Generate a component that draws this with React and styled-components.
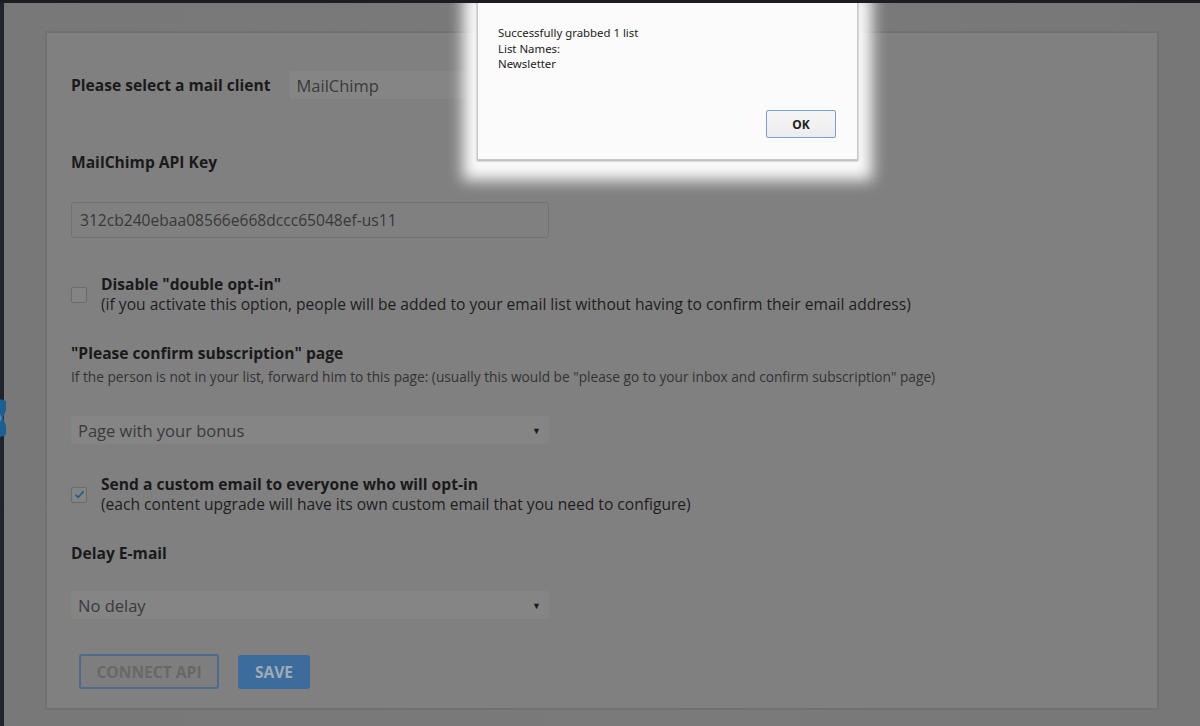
import React from "react";
import styled, { createGlobalStyle } from "styled-components";

const Global = createGlobalStyle`
  html, body { margin: 0; padding: 0; }
  body { font-family: "Open Sans", "Noto Sans", sans-serif; background: #787878; }
`;

const Page = styled.div`
  position: relative;
  display: flex;
  min-height: 726px;
  background: linear-gradient(90deg, #787878 0%, #7a7a7a 60%, #777 100%);
  border-top: 3px solid #1c1d22;
  box-sizing: border-box;
  overflow: hidden;
`;

const SideStrip = styled.div`
  position: relative;
  width: 4px;
  flex: none;
  background: #1f232a;
`;

const SideArrow = styled.svg`
  position: absolute;
  left: 0;
  top: 396px;
`;

const Main = styled.div`
  flex: 1;
  padding: 28px 41px 13px 41px;
`;

const Panel = styled.div`
  border: 2px solid #717171;
  background: #808080;
  padding: 38px 24px 19px 24px;
  display: flex;
  flex-direction: column;
  align-items: flex-start;
`;

const InlineRow = styled.div`
  display: flex;
  align-items: center;
  gap: 19px;
`;

const Label = styled.div`
  font-size: 15.6px;
  font-weight: 700;
  line-height: 22px;
  color: #1a1a1a;
  margin-top: ${(p) => p.$mt || 0}px;
`;

const Help = styled.div`
  font-size: 13.7px;
  line-height: 18px;
  color: #333;
  margin-top: 4px;
`;

const SelectBox = styled.div`
  box-sizing: border-box;
  width: ${(p) => p.$w || 478}px;
  height: ${(p) => p.$h || 28}px;
  margin-top: ${(p) => p.$mt || 0}px;
  background: #858585;
  border-radius: 2px;
  display: flex;
  align-items: center;
  justify-content: space-between;
  padding: 0 8px 0 7px;
  font-size: 16.5px;
  color: #3a3a3a;
`;

const Caret = styled.span`
  font-size: 9px;
  color: #1a1a1a;
`;

const TextInput = styled.div`
  box-sizing: border-box;
  width: 478px;
  height: 36px;
  margin-top: ${(p) => p.$mt || 0}px;
  border: 1px solid #717171;
  border-radius: 3px;
  display: flex;
  align-items: center;
  padding: 0 8px;
  font-size: 15.6px;
  color: #383838;
`;

const CheckRow = styled.div`
  display: flex;
  align-items: center;
  gap: 14px;
  margin-top: ${(p) => p.$mt || 0}px;
`;

const Box = styled.div`
  box-sizing: border-box;
  width: 16px;
  height: 16px;
  border: 1px solid #6b6b6b;
  border-radius: 2px;
  background: #848484;
  display: flex;
  align-items: center;
  justify-content: center;
  flex: none;
  margin-top: 1px;
`;

const CheckText = styled.div`
  line-height: 20px;
  font-size: 15.6px;
  color: #1e1e1e;
`;

const CheckTitle = styled.div`
  font-weight: 700;
  color: #1a1a1a;
`;

const Buttons = styled.div`
  display: flex;
  gap: 19px;
  margin-top: 35px;
  margin-left: 8px;
`;

const OutlineBtn = styled.div`
  box-sizing: border-box;
  width: 140px;
  height: 35px;
  border: 2px solid #4d6b8e;
  border-radius: 3px;
  background: #7e7e7e;
  display: flex;
  align-items: center;
  justify-content: center;
  font-size: 15.6px;
  font-weight: 700;
  color: #686868;
`;

const FilledBtn = styled.div`
  box-sizing: border-box;
  width: 72px;
  height: 34px;
  margin-top: 1px;
  border-radius: 3px;
  background: #3b6c9c;
  display: flex;
  align-items: center;
  justify-content: center;
  font-size: 15.6px;
  font-weight: 700;
  color: #a0aab6;
`;

const Dialog = styled.div`
  position: absolute;
  left: 477px;
  top: -3px;
  width: 381px;
  height: 160px;
  box-sizing: border-box;
  background: #fbfbfb;
  border: 1px solid #c9c9c9;
  border-top: none;
  box-shadow: 0 1px 2px rgba(0, 0, 0, 0.35), 0 6px 14px 14px rgba(255, 255, 255, 0.96);
  padding: 25px 21px 21px 20px;
  display: flex;
  flex-direction: column;
  font-family: "Noto Sans", "Open Sans", sans-serif;
`;

const DialogText = styled.div`
  flex: 1;
  font-size: 11.4px;
  line-height: 15.5px;
  color: #222;
`;

const DialogActions = styled.div`
  display: flex;
  justify-content: flex-end;
`;

const OkButton = styled.div`
  box-sizing: border-box;
  width: 70px;
  height: 28px;
  border: 1px solid #7a9fd4;
  border-radius: 2px;
  background: linear-gradient(#f6f6f6, #ececec);
  display: flex;
  align-items: center;
  justify-content: center;
  font-size: 12px;
  font-weight: 700;
  color: #222;
`;

export default function App() {
  return (
    <>
      <Global />
      <Page>
        <SideStrip>
          <SideArrow width="6" height="38" viewBox="0 0 6 38">
            <polygon points="0,0 6,2 6,11 3,19 6,27 6,36 0,38" fill="#1b5f93" />
            <polygon points="0,15 2,19 0,23" fill="#4f86b3" />
          </SideArrow>
        </SideStrip>
        <Main>
          <Panel>
            <InlineRow>
              <Label>Please select a mail client</Label>
              <SelectBox $w={260}>MailChimp</SelectBox>
            </InlineRow>

            <Label $mt={52}>MailChimp API Key</Label>
            <TextInput $mt={29}>312cb240ebaa08566e668dccc65048ef-us11</TextInput>

            <CheckRow $mt={36}>
              <Box />
              <CheckText>
                <CheckTitle>Disable "double opt-in"</CheckTitle>
                (if you activate this option, people will be added to your email list without having to confirm their email address)
              </CheckText>
            </CheckRow>

            <Label $mt={28}>"Please confirm subscription" page</Label>
            <Help>
              If the person is not in your list, forward him to this page: (usually this would be "please go to your inbox and confirm subscription" page)
            </Help>
            <SelectBox $mt={30}>
              Page with your bonus
              <Caret>▼</Caret>
            </SelectBox>

            <CheckRow $mt={30}>
              <Box>
                <svg width="11" height="9" viewBox="0 0 11 9">
                  <path d="M1.5 4.8 L4.2 7.3 L9.6 1.4" fill="none" stroke="#22608f" strokeWidth="1.8" />
                </svg>
              </Box>
              <CheckText>
                <CheckTitle>Send a custom email to everyone who will opt-in</CheckTitle>
                (each content upgrade will have its own custom email that you need to configure)
              </CheckText>
            </CheckRow>

            <Label $mt={28}>Delay E-mail</Label>
            <SelectBox $mt={27}>
              No delay
              <Caret>▼</Caret>
            </SelectBox>

            <Buttons>
              <OutlineBtn>CONNECT API</OutlineBtn>
              <FilledBtn>SAVE</FilledBtn>
            </Buttons>
          </Panel>
        </Main>

        <Dialog>
          <DialogText>
            Successfully grabbed 1 list
            <br />
            List Names:
            <br />
            Newsletter
          </DialogText>
          <DialogActions>
            <OkButton>OK</OkButton>
          </DialogActions>
        </Dialog>
      </Page>
    </>
  );
}
